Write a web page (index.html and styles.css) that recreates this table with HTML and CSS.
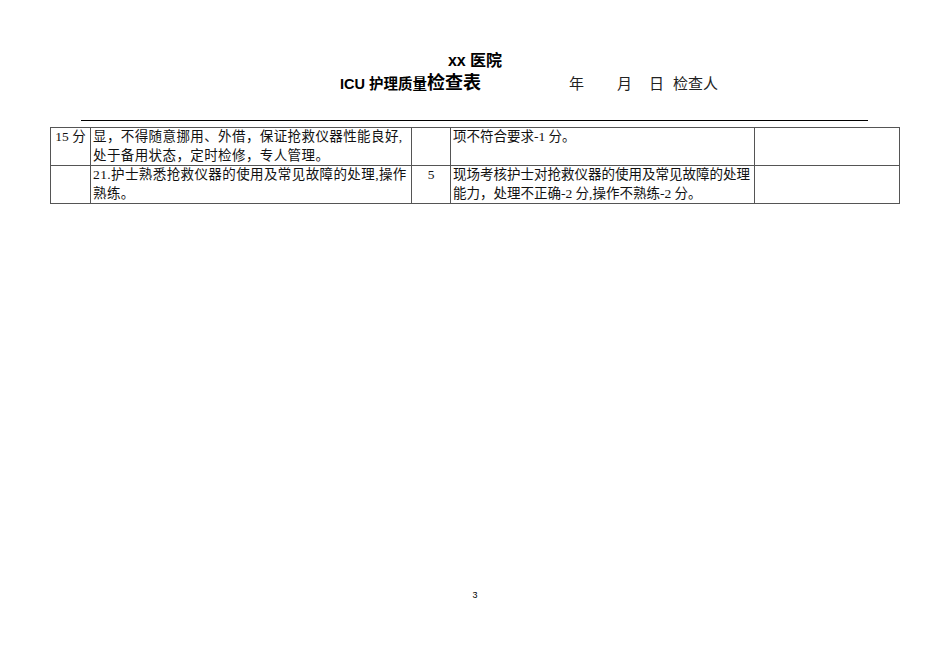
FILE: index.html
```html
<!DOCTYPE html>
<html lang="zh-CN">
<head>
<meta charset="utf-8">
<link rel="stylesheet" href="styles.css">
</head>
<body>
<div class="page">
  <div class="title">xx 医院</div>
  <div class="subtitle">
    <span class="sub-small">ICU 护理质量</span><span class="sub-big">检查表</span>
    <span class="date">
      <span class="d-year">年</span>
      <span class="d-month">月</span>
      <span class="d-day">日</span>
      <span class="d-check">检查人</span>
    </span>
  </div>
  <div class="rule"></div>
  <table class="grid">
    <colgroup>
      <col class="c1"><col class="c2"><col class="c3"><col class="c4"><col class="c5">
    </colgroup>
    <tr>
      <td class="score">15 分</td>
      <td class="wide">显，不得随意挪用、外借，保证抢救仪器性能良好,<br>处于备用状态，定时检修，专人管理。</td>
      <td class="num"></td>
      <td>项不符合要求-1 分。</td>
      <td></td>
    </tr>
    <tr>
      <td class="score"></td>
      <td class="wide">21.护士熟悉抢救仪器的使用及常见故障的处理,操作<br>熟练。</td>
      <td class="num">5</td>
      <td>现场考核护士对抢救仪器的使用及常见故障的处理<br>能力，处理不正确-2 分,操作不熟练-2 分。</td>
      <td></td>
    </tr>
  </table>
  <div class="pageno">3</div>
</div>
</body>
</html>
```

FILE: styles.css
```css
html, body {
  margin: 0;
  padding: 0;
  background: #ffffff;
}

.page {
  width: 950px;
  height: 672px;
  position: relative;
  font-family: "Liberation Serif", "Noto Sans CJK SC", serif;
  color: #000;
}

.title {
  padding-top: 50px;
  height: 22px;
  text-align: center;
  font-family: "Liberation Sans", "Noto Sans CJK SC", sans-serif;
  font-weight: bold;
  font-size: 16px;
  line-height: 22px;
}

.subtitle {
  display: flex;
  align-items: baseline;
  padding-left: 340px;
  height: 22px;
  line-height: 22px;
  font-family: "Liberation Sans", "Noto Sans CJK SC", sans-serif;
}

.sub-small {
  font-weight: bold;
  font-size: 14.5px;
}

.sub-big {
  font-weight: bold;
  font-size: 18px;
}

.date {
  display: flex;
  font-size: 15px;
  color: #222;
  margin-left: 88px;
}

.d-month { margin-left: 33px; }
.d-day { margin-left: 17px; }
.d-check { margin-left: 9px; }

.rule {
  margin: 26px 0 0 81px;
  width: 787px;
  height: 1px;
  background: #000;
}

.grid {
  margin: 6px 0 0 50px;
  border-collapse: collapse;
  table-layout: fixed;
  width: 849px;
  font-size: 13.5px;
  line-height: 18.5px;
  color: #111;
}

.c1 { width: 40px; }
.c2 { width: 321px; }
.c3 { width: 39px; }
.c4 { width: 304px; }
.c5 { width: 145px; }

.grid td {
  border: 1px solid #555;
  padding: 0 0 0 2px;
  vertical-align: top;
  height: 36px;
  white-space: nowrap;
  overflow: hidden;
}

.grid td.wide {
  letter-spacing: 0.4px;
}

.grid td.score {
  text-align: center;
  padding: 0;
}

.grid td.num {
  text-align: center;
  padding: 0;
}

.pageno {
  position: absolute;
  left: 0;
  right: 0;
  top: 590px;
  text-align: center;
  font-family: "Liberation Sans", sans-serif;
  font-size: 9px;
}
```
